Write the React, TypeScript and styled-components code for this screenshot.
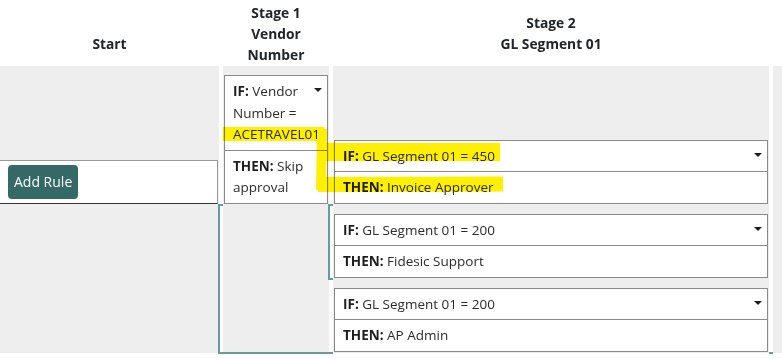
import React from "react";
import styled, { createGlobalStyle } from "styled-components";

const Global = createGlobalStyle`
  html, body { margin: 0; padding: 0; background: #ffffff; }
  body {
    font-family: "Open Sans", "Noto Sans", sans-serif;
    color: #212529;
    overflow: hidden;
  }
`;

const COLS = "219px 106px 436px 1fr";

const Page = styled.div`
  position: relative;
  width: 782px;
  height: 359px;
  overflow: hidden;
`;

const Header = styled.div`
  display: grid;
  grid-template-columns: ${COLS};
  column-gap: 4px;
  height: 66px;
`;

const HeadCell = styled.div`
  display: flex;
  flex-direction: column;
  justify-content: center;
  align-items: center;
  text-align: center;
  font-weight: 700;
  font-size: 13.8px;
  line-height: 21px;
  color: #212529;
`;

const Body = styled.div`
  display: grid;
  grid-template-columns: ${COLS};
  grid-template-rows: auto auto;
  column-gap: 4px;
`;

const Cell = styled.div<{ $top?: number; $bottom?: number; $end?: boolean }>`
  background: #eeeeee;
  display: flex;
  flex-direction: column;
  justify-content: ${(p) => (p.$end ? "flex-end" : "flex-start")};
  gap: 10px;
  padding-top: ${(p) => p.$top ?? 0}px;
  padding-bottom: ${(p) => p.$bottom ?? 0}px;
`;

const AddRuleRow = styled.div`
  background: #ffffff;
  border-top: 1px solid #9a9a9a;
  border-right: 1px solid #9a9a9a;
  border-bottom: 1px solid #333333;
  padding: 4px 8px;
  margin-right: 1px;
  display: flex;
  align-items: center;
`;

const Button = styled.button`
  height: 34px;
  padding: 0 6px;
  background: #356966;
  color: #ffffff;
  border: none;
  border-radius: 4px;
  font-family: "Open Sans", "Noto Sans", sans-serif;
  font-size: 14px;
`;

const Card = styled.div`
  background: #ffffff;
  border: 1px solid #8a8a8a;
  margin: 0 1px;
`;

const Section = styled.div`
  padding: 5px 4px 4px 8px;
  font-size: 13.5px;
  line-height: 21.5px;
  color: #2b2b2b;
  & + & {
    border-top: 1px solid #8a8a8a;
  }
`;

const Label = styled.b`
  font-weight: 700;
  color: #1e1e1e;
`;

const Caret = styled.span`
  float: right;
  width: 0;
  height: 0;
  border-left: 4px solid transparent;
  border-right: 4px solid transparent;
  border-top: 4px solid #1e1e1e;
  margin: 7px 1px 0 6px;
`;

const Overlay = styled.svg<{ $multiply?: boolean }>`
  position: absolute;
  left: 0;
  top: 0;
  pointer-events: none;
  mix-blend-mode: ${(p) => (p.$multiply ? "multiply" : "normal")};
`;

type Rule = { cond: string; then: string };

const RuleCard = ({ cond, then }: Rule) => (
  <Card>
    <Section>
      <Caret />
      <Label>IF:</Label> {cond}
    </Section>
    <Section>
      <Label>THEN:</Label> {then}
    </Section>
  </Card>
);

const stage2: Rule[] = [
  { cond: "GL Segment 01 = 450", then: "Invoice Approver" },
  { cond: "GL Segment 01 = 200", then: "Fidesic Support" },
  { cond: "GL Segment 01 = 200", then: "AP Admin" },
];

const TEAL = "#669c99";
const YELLOW = "#ffef00";

export default function App() {
  return (
    <Page>
      <Global />
      <Header>
        <HeadCell>
          <span>&nbsp;</span>
          <span>Start</span>
        </HeadCell>
        <HeadCell>
          <span>Stage 1</span>
          <span>Vendor</span>
          <span>Number</span>
        </HeadCell>
        <HeadCell>
          <span>Stage 2</span>
          <span>GL Segment 01</span>
        </HeadCell>
        <HeadCell />
      </Header>
      <Body>
        <Cell $end>
          <AddRuleRow>
            <Button>Add Rule</Button>
          </AddRuleRow>
        </Cell>
        <Cell $top={9}>
          <RuleCard cond="Vendor Number = ACETRAVEL01" then="Skip approval" />
        </Cell>
        <Cell $end>
          <RuleCard {...stage2[0]} />
        </Cell>
        <Cell />
        <Cell />
        <Cell />
        <Cell $top={10} $bottom={1}>
          <RuleCard {...stage2[1]} />
          <RuleCard {...stage2[2]} />
        </Cell>
        <Cell />
      </Body>
      <Overlay width="782" height="359" viewBox="0 0 782 359">
        <g fill={TEAL}>
          <rect x="218" y="204" width="2" height="150" />
          <rect x="218" y="204" width="5" height="2" />
          <rect x="218" y="352" width="115" height="2" />
          <rect x="328" y="204" width="2" height="76" />
          <rect x="328" y="204" width="5" height="2" />
          <rect x="328" y="278" width="5" height="2" />
          <rect x="769" y="352" width="4" height="2" />
        </g>
      </Overlay>
      <Overlay $multiply width="782" height="359" viewBox="0 0 782 359">
        <g stroke={YELLOW} fill="none" strokeLinejoin="round">
          <path d="M223 134 L324 134" strokeWidth="14" />
          <path d="M322 129 L321 190" strokeWidth="10" />
          <path d="M318 152 L500 152" strokeWidth="18" />
          <path d="M318 184.5 L503 184" strokeWidth="15" />
        </g>
      </Overlay>
    </Page>
  );
}
